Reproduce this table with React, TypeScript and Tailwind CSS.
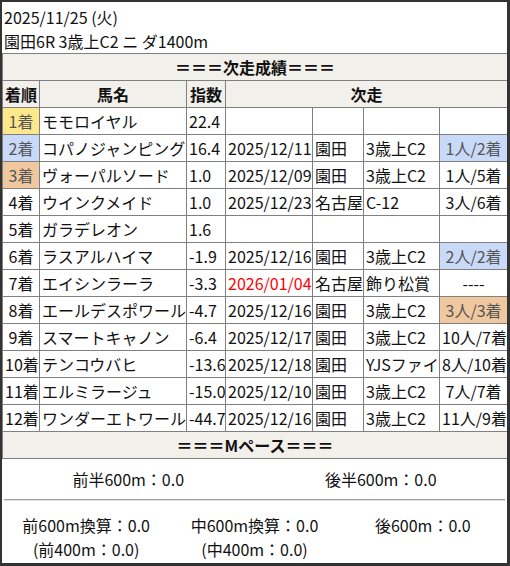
import React from 'react';

type Row = {
  rank: string;
  name: string;
  idx: string;
  date?: string;
  red?: boolean;
  place?: string;
  race?: string;
  result?: string;
  rankBg?: string;
  resultBg?: string;
};

const rows: Row[] = [
  { rank: '1着', name: 'モモロイヤル', idx: '22.4', rankBg: 'bg-[#fee88c]' },
  { rank: '2着', name: 'コパノジャンピング', idx: '16.4', date: '2025/12/11', place: '園田', race: '3歳上C2', result: '1人/2着', rankBg: 'bg-[#c9daf8]', resultBg: 'bg-[#c9daf8]' },
  { rank: '3着', name: 'ヴォーパルソード', idx: '1.0', date: '2025/12/09', place: '園田', race: '3歳上C2', result: '1人/5着', rankBg: 'bg-[#f0c8a0]' },
  { rank: '4着', name: 'ウインクメイド', idx: '1.0', date: '2025/12/23', place: '名古屋', race: 'C-12', result: '3人/6着' },
  { rank: '5着', name: 'ガラデレオン', idx: '1.6' },
  { rank: '6着', name: 'ラスアルハイマ', idx: '-1.9', date: '2025/12/16', place: '園田', race: '3歳上C2', result: '2人/2着', resultBg: 'bg-[#c9daf8]' },
  { rank: '7着', name: 'エイシンラーラ', idx: '-3.3', date: '2026/01/04', red: true, place: '名古屋', race: '飾り松賞', result: '----' },
  { rank: '8着', name: 'エールデスポワール', idx: '-4.7', date: '2025/12/16', place: '園田', race: '3歳上C2', result: '3人/3着', resultBg: 'bg-[#f0c8a0]' },
  { rank: '9着', name: 'スマートキャノン', idx: '-6.4', date: '2025/12/17', place: '園田', race: '3歳上C2', result: '10人/7着' },
  { rank: '10着', name: 'テンコウバヒ', idx: '-13.6', date: '2025/12/18', place: '園田', race: 'YJSファイ', result: '8人/10着' },
  { rank: '11着', name: 'エルミラージュ', idx: '-15.0', date: '2025/12/10', place: '園田', race: '3歳上C2', result: '7人/7着' },
  { rank: '12着', name: 'ワンダーエトワール', idx: '-44.7', date: '2025/12/16', place: '園田', race: '3歳上C2', result: '11人/9着' },
];

const cell = 'border border-[#808080] px-[2px] py-0 h-[27px] whitespace-nowrap overflow-hidden';

export default function App() {
  return (
    <div
      className="w-[510px] h-[566px] bg-white border-l-2 border-t-2 border-r-[3px] border-b-[3px] border-[#333] text-[16px] leading-[24px] text-[#111] overflow-hidden"
      style={{ fontFamily: '"Noto Sans CJK JP", "Noto Sans", sans-serif' }}
    >
      <div className="pt-[3px] px-[2px]">
        <div>2025/11/25 (火)</div>
        <div>園田6R 3歳上C2 ニ ダ1400m</div>
      </div>

      <table className="w-full table-fixed border-collapse">
        <colgroup>
          <col className="w-[37px]" />
          <col className="w-[147px]" />
          <col className="w-[39px]" />
          <col className="w-[87px]" />
          <col className="w-[51px]" />
          <col className="w-[76px]" />
          <col className="w-[68px]" />
        </colgroup>
        <tbody>
          <tr className="bg-[#f1f0eb]">
            <td colSpan={7} className={`${cell} text-center font-bold`}>＝＝＝次走成績＝＝＝</td>
          </tr>
          <tr className="bg-[#f1f0eb] font-bold">
            <td className={`${cell} text-center`}>着順</td>
            <td className={`${cell} text-center`}>馬名</td>
            <td className={`${cell} text-center`}>指数</td>
            <td colSpan={4} className={`${cell} text-center`}>次走</td>
          </tr>
          {rows.map((r) => (
            <tr key={r.rank}>
              <td className={`${cell} text-center ${r.rankBg ? `${r.rankBg} text-[#555]` : ''}`}>{r.rank}</td>
              <td className={cell}>{r.name}</td>
              <td className={cell}>{r.idx}</td>
              <td className={`${cell} ${r.red ? 'text-[#ff0000]' : ''}`}>{r.date}</td>
              <td className={cell}>{r.place}</td>
              <td className={cell}>{r.race}</td>
              <td className={`${cell} text-center ${r.resultBg ? `${r.resultBg} text-[#555]` : ''}`}>{r.result}</td>
            </tr>
          ))}
          <tr className="bg-[#f1f0eb]">
            <td colSpan={7} className={`${cell} text-center font-bold`}>＝＝＝Mペース＝＝＝</td>
          </tr>
        </tbody>
      </table>

      <div className="grid grid-cols-2 h-[40px] items-center text-center">
        <div>前半600m：0.0</div>
        <div>後半600m：0.0</div>
      </div>
      <div className="mx-[2px] border-t border-b border-t-[#a0a0a0] border-b-[#e0e0e0]" />
      <div className="grid grid-cols-3 pt-[12px] text-center">
        <div>
          <div>前600m換算：0.0</div>
          <div>(前400m：0.0)</div>
        </div>
        <div>
          <div>中600m換算：0.0</div>
          <div>(中400m：0.0)</div>
        </div>
        <div>
          <div>後600m：0.0</div>
        </div>
      </div>
    </div>
  );
}
